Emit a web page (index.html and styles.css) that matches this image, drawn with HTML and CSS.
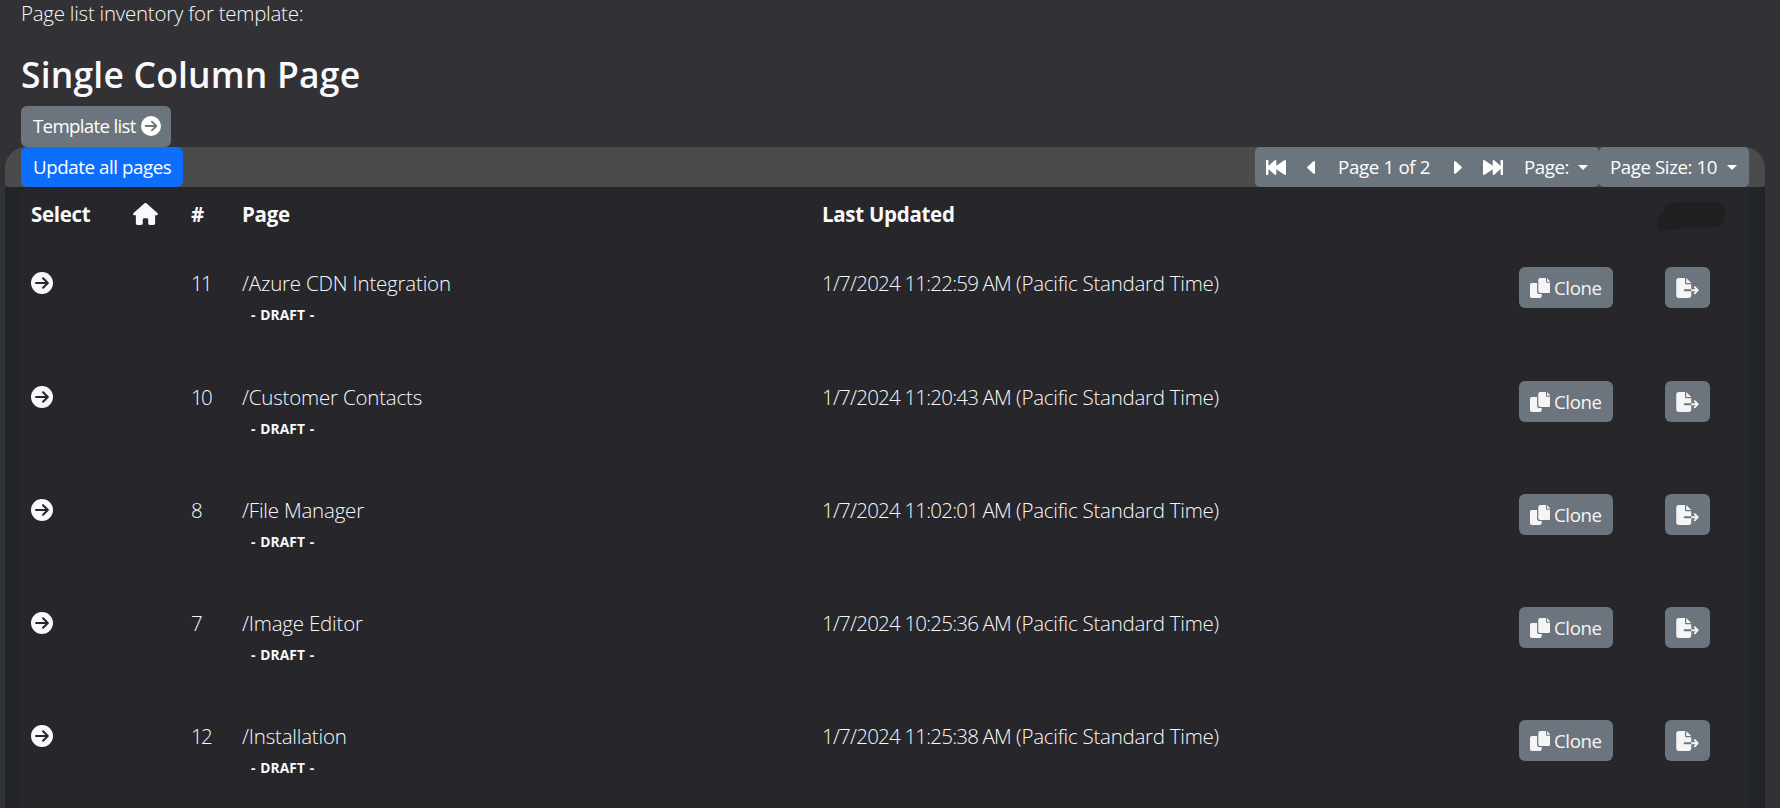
FILE: index.html
```
<!DOCTYPE html>
<html lang="en">
    <head>
        <meta charset="UTF-8">
        <title>Template Pages</title>
        <link rel="stylesheet" href="styles.css">
    </head>
    <body>
        <!-- Shared icons -->
        <svg class="sprite">
            <symbol id="arrow" viewBox="0 0 512 512"><path d="M0 256a256 256 0 1 0 512 0A256 256 0 1 0 0 256zM297 385c-9.4 9.4-24.6 9.4-33.9 0s-9.4-24.6 0-33.9l71-71L120 280c-13.3 0-24-10.7-24-24s10.7-24 24-24l214.1 0-71-71c-9.4-9.4-9.4-24.6 0-33.9s24.6-9.4 33.9 0L409 239c9.4 9.4 9.4 24.6 0 33.9L297 385z"/></symbol>
            <symbol id="house" viewBox="0 0 576 512"><path d="M575.8 255.5c0 18-15 32.1-32 32.1l-32 0 .7 160.2c0 2.7-.2 5.4-.5 8.1l0 16.2c0 22.1-17.9 40-40 40l-16 0-40 0-24 0c-22.1 0-40-17.9-40-40l0-24 0-64c0-17.7-14.3-32-32-32l-64 0c-17.7 0-32 14.3-32 32l0 64 0 24c0 22.1-17.9 40-40 40l-24 0-40 0-16 0c-22.1 0-40-17.9-40-40l0-112 0-72.5-32 0c-18 0-32-14-32-32.1c0-9 3-17 10-24L266.4 8c7-7 15-8 22-8s15 2 21 7L564.8 231.5c8 7 12 15 11 24z"/></symbol>
            <symbol id="copy" viewBox="0 0 20 20"><path d="M10.2 0H16v3.8a1 1 0 0 0 1 1h3.5v8.2a1.9 1.9 0 0 1-1.9 1.9h-8.4a1.9 1.9 0 0 1-1.9-1.9V1.9A1.9 1.9 0 0 1 10.2 0zM17 0l3.5 3.7H17zM1.9 5h5.2v8.5a2.6 2.6 0 0 0 2.6 2.6h2v2a1.9 1.9 0 0 1-1.9 1.9H1.9A1.9 1.9 0 0 1 0 18.1V6.9A1.9 1.9 0 0 1 1.9 5z"/></symbol>
            <symbol id="export" viewBox="0 0 576 512"><path d="M0 64C0 28.7 28.7 0 64 0L224 0l0 128c0 17.7 14.3 32 32 32l128 0 0 128-168 0c-13.3 0-24 10.7-24 24s10.7 24 24 24l168 0 0 112c0 35.3-28.7 64-64 64L64 512c-35.3 0-64-28.7-64-64L0 64zM384 336l0-48 110.1 0-39-39c-9.4-9.4-9.4-24.6 0-33.9s24.6-9.4 33.9 0l80 80c9.4 9.4 9.4 24.6 0 33.9l-80 80c-9.4 9.4-24.6 9.4-33.9 0s-9.4-24.6 0-33.9l39-39L384 336zm0-208l-128 0L256 0 384 128z"/></symbol>
            <symbol id="first" viewBox="0 0 20 15"><path d="M0 .8a1.2 1.2 0 0 1 2.4 0v5.3L8.5.4Q10-.5 10.3 1v4.8L18 .4Q20-.5 20 1v13q0 1.5-2 .6L10.3 9.2V14q-.3 1.5-1.8.6L2.4 8.9v5.3a1.2 1.2 0 0 1-2.4 0z"/></symbol>
            <symbol id="prev" viewBox="0 0 8 13"><path d="M8 1v11q-.5 1.5-1.8.6L.5 7.3q-.8-.8 0-1.6L6.2.4Q7.5-.5 8 1z"/></symbol>
        </svg>

        <div id="intro">
            <p>Page list inventory for template:</p>
            <h1>Single Column Page</h1>
            <a class="btn" id="template-list"><span>Template list</span><svg class="icon"><use href="#arrow"/></svg></a>
        </div>

        <div id="toolbar">
            <a class="btn btn-primary"><span>Update all pages</span></a>
            <div id="pager">
                <a class="btn pg-first"><svg class="skip"><use href="#first"/></svg></a>
                <a class="btn pg-prev"><svg class="step"><use href="#prev"/></svg></a>
                <a class="btn pg-count"><span>Page 1 of 2</span></a>
                <a class="btn pg-next"><svg class="step flip"><use href="#prev"/></svg></a>
                <a class="btn pg-last"><svg class="skip flip"><use href="#first"/></svg></a>
                <a class="btn pg-page"><span>Page:</span><i class="caret"></i></a>
                <a class="btn pg-size"><span>Page Size: 10</span><i class="caret"></i></a>
            </div>
        </div>

        <div id="panel">
            <table>
                <colgroup>
                    <col class="c-select"><col class="c-home"><col class="c-num"><col class="c-page"><col class="c-date"><col class="c-clone"><col class="c-export">
                </colgroup>
                <thead>
                    <tr>
                        <th>Select</th>
                        <th><svg class="house"><use href="#house"/></svg></th>
                        <th>#</th>
                        <th>Page</th>
                        <th>Last Updated</th>
                        <th></th>
                        <th><svg class="scribble" viewBox="0 0 72 31"><path d="M7 12Q7 1 17 1L31 0H60Q71 1 71 11Q70 26 58 26H35Q21 27 14 29Q2 34 0 22Q0 15 7 12z"/></svg></th>
                    </tr>
                </thead>
                <tbody id="page-list"></tbody>
            </table>
        </div>

        <script type="text/javascript">
            const pages = [
                {num: 11, name: '/Azure CDN Integration', updated: '1/7/2024 11:22:59 AM'},
                {num: 10, name: '/Customer Contacts', updated: '1/7/2024 11:20:43 AM'},
                {num: 8, name: '/File Manager', updated: '1/7/2024 11:02:01 AM'},
                {num: 7, name: '/Image Editor', updated: '1/7/2024 10:25:36 AM'},
                {num: 12, name: '/Installation', updated: '1/7/2024 11:25:38 AM'}
            ];

            // Builds one table row for each page
            const pageList = document.getElementById('page-list');
            for (var i = 0; i < pages.length; i++) {
                const row = document.createElement('tr');
                row.innerHTML = `
                    <td><svg class="icon select"><use href="#arrow"/></svg></td>
                    <td></td>
                    <td class="num">${pages[i].num}</td>
                    <td class="name">${pages[i].name}<b class="badge">- DRAFT -</b></td>
                    <td><span class="time">${pages[i].updated}</span> (Pacific Standard Time)</td>
                    <td><a class="btn btn-row"><svg class="copy"><use href="#copy"/></svg><span>Clone</span></a></td>
                    <td><a class="btn btn-row"><svg class="export"><use href="#export"/></svg></a></td>
                `;
                pageList.appendChild(row);
            }
        </script>
    </body>
</html>
```
FILE: styles.css
```
* {
    margin: 0;
    padding: 0;
    box-sizing: border-box;
}

body {
    height: 808px;
    overflow: hidden;
    font: 300 21.3px/32px 'Open Sans', 'Noto Sans', sans-serif;
    color: #f8f9fa;
    background-color: #323135;
}

svg {
    display: block;
    flex: none;
    fill: currentColor;
}

.sprite {
    display: none;
}

#intro {
    height: 147px;
    padding-left: 21px;
}

#intro p {
    height: 52px;
    line-height: 26px;
    font-size: 20.5px;
    letter-spacing: -.25px;
}

#intro h1 {
    height: 54px;
    font-size: 35.5px;
    font-weight: 600;
    line-height: 45px;
    letter-spacing: .18px;
}

.btn {
    display: flex;
    align-items: center;
    height: 40px;
    padding: 0 12px;
    border-radius: 6px;
    font-size: 18.7px;
    font-weight: 400;
    letter-spacing: -.42px;
    white-space: nowrap;
    color: white;
    background-color: #6c757d;
}

.icon {
    width: 20px;
    height: 20px;
}

#template-list {
    justify-content: space-between;
    width: 150px;
    height: 41px;
    padding: 0 10px 1px 12px;
    letter-spacing: -.68px;
}

#toolbar {
    display: flex;
    justify-content: space-between;
    width: 1760px;
    height: 40px;
    margin-left: 5px;
    padding: 0 16px;
    border-radius: 21px 21px 4px 4px;
    background-color: #4b4b4b;
}

.btn-primary {
    width: 162px;
    background-color: #0d6efd;
}

#pager {
    display: flex;
    width: 494px;
}

#pager .btn {
    padding: 0;
    border-radius: 0;
}

#pager .pg-first {
    width: 42px;
    padding-left: 11px;
    border-radius: 5px 0 0 5px;
}

#pager .pg-prev {
    width: 30px;
    padding-left: 10px;
}

#pager .pg-count {
    width: 116px;
    padding-left: 11px;
    letter-spacing: -.32px;
}

#pager .pg-next {
    width: 30px;
    padding-left: 11px;
}

#pager .pg-last {
    width: 40px;
    padding-left: 10px;
}

#pager .pg-page {
    justify-content: space-between;
    width: 86px;
    padding: 0 11px;
    border-radius: 0 5px 5px 0;
}

#pager .pg-size {
    flex: 1;
    justify-content: space-between;
    padding: 0 12px 0 11px;
    border-radius: 5px;
}

.skip {
    width: 20px;
    height: 15px;
}

.step {
    width: 8px;
    height: 13px;
}

.flip {
    transform: scaleX(-1);
}

.caret {
    border: 5.3px solid transparent;
    border-top-color: white;
    border-bottom: 0;
}

#panel {
    width: 1760px;
    height: 621px;
    margin-left: 5px;
    padding: 0 16px;
    background-color: #212529;
}

table {
    width: 1728px;
    table-layout: fixed;
    border-collapse: collapse;
    background-color: #27262b;
}

.c-select { width: 102px; }
.c-home { width: 58px; }
.c-num { width: 50px; }
.c-page { width: 580px; }
.c-date { width: 697px; }
.c-clone { width: 146px; }
.c-export { width: 95px; }

th, td {
    padding: 11px 0 0 11px;
    text-align: left;
    vertical-align: top;
}

th:nth-child(-n+3), td:nth-child(-n+3) {
    padding-left: 10px;
}

th {
    height: 69px;
    padding-top: 11px;
    font-size: 20.5px;
    font-weight: 700;
    letter-spacing: -.3px;
}

td {
    height: 113px;
    font-size: 20.5px;
    letter-spacing: -.25px;
}

tbody tr:first-child td {
    height: 114px;
}

.num {
    letter-spacing: -1.8px;
}

.name {
    letter-spacing: -.2px;
}

.time {
    letter-spacing: -.79px;
}

.house {
    width: 25px;
    height: 22px;
    margin-top: 5px;
}

.scribble {
    width: 71px;
    height: 30px;
    margin: 4px 0 0 -9px;
    fill: #202020;
}

.select {
    width: 22px;
    height: 22px;
    margin-top: 5px;
}

.badge {
    display: block;
    padding-left: 9px;
    font-size: 13.8px;
    font-weight: 700;
    letter-spacing: .1px;
    word-spacing: 1px;
    line-height: 32px;
}

.btn-row {
    display: inline-flex;
    gap: 4px;
    height: 41px;
    padding: 0 11px;
    color: #f5f5f5;
}

.copy {
    width: 20px;
    height: 20px;
    overflow: visible;
}

.export {
    width: 23px;
    height: 20px;
}
```
